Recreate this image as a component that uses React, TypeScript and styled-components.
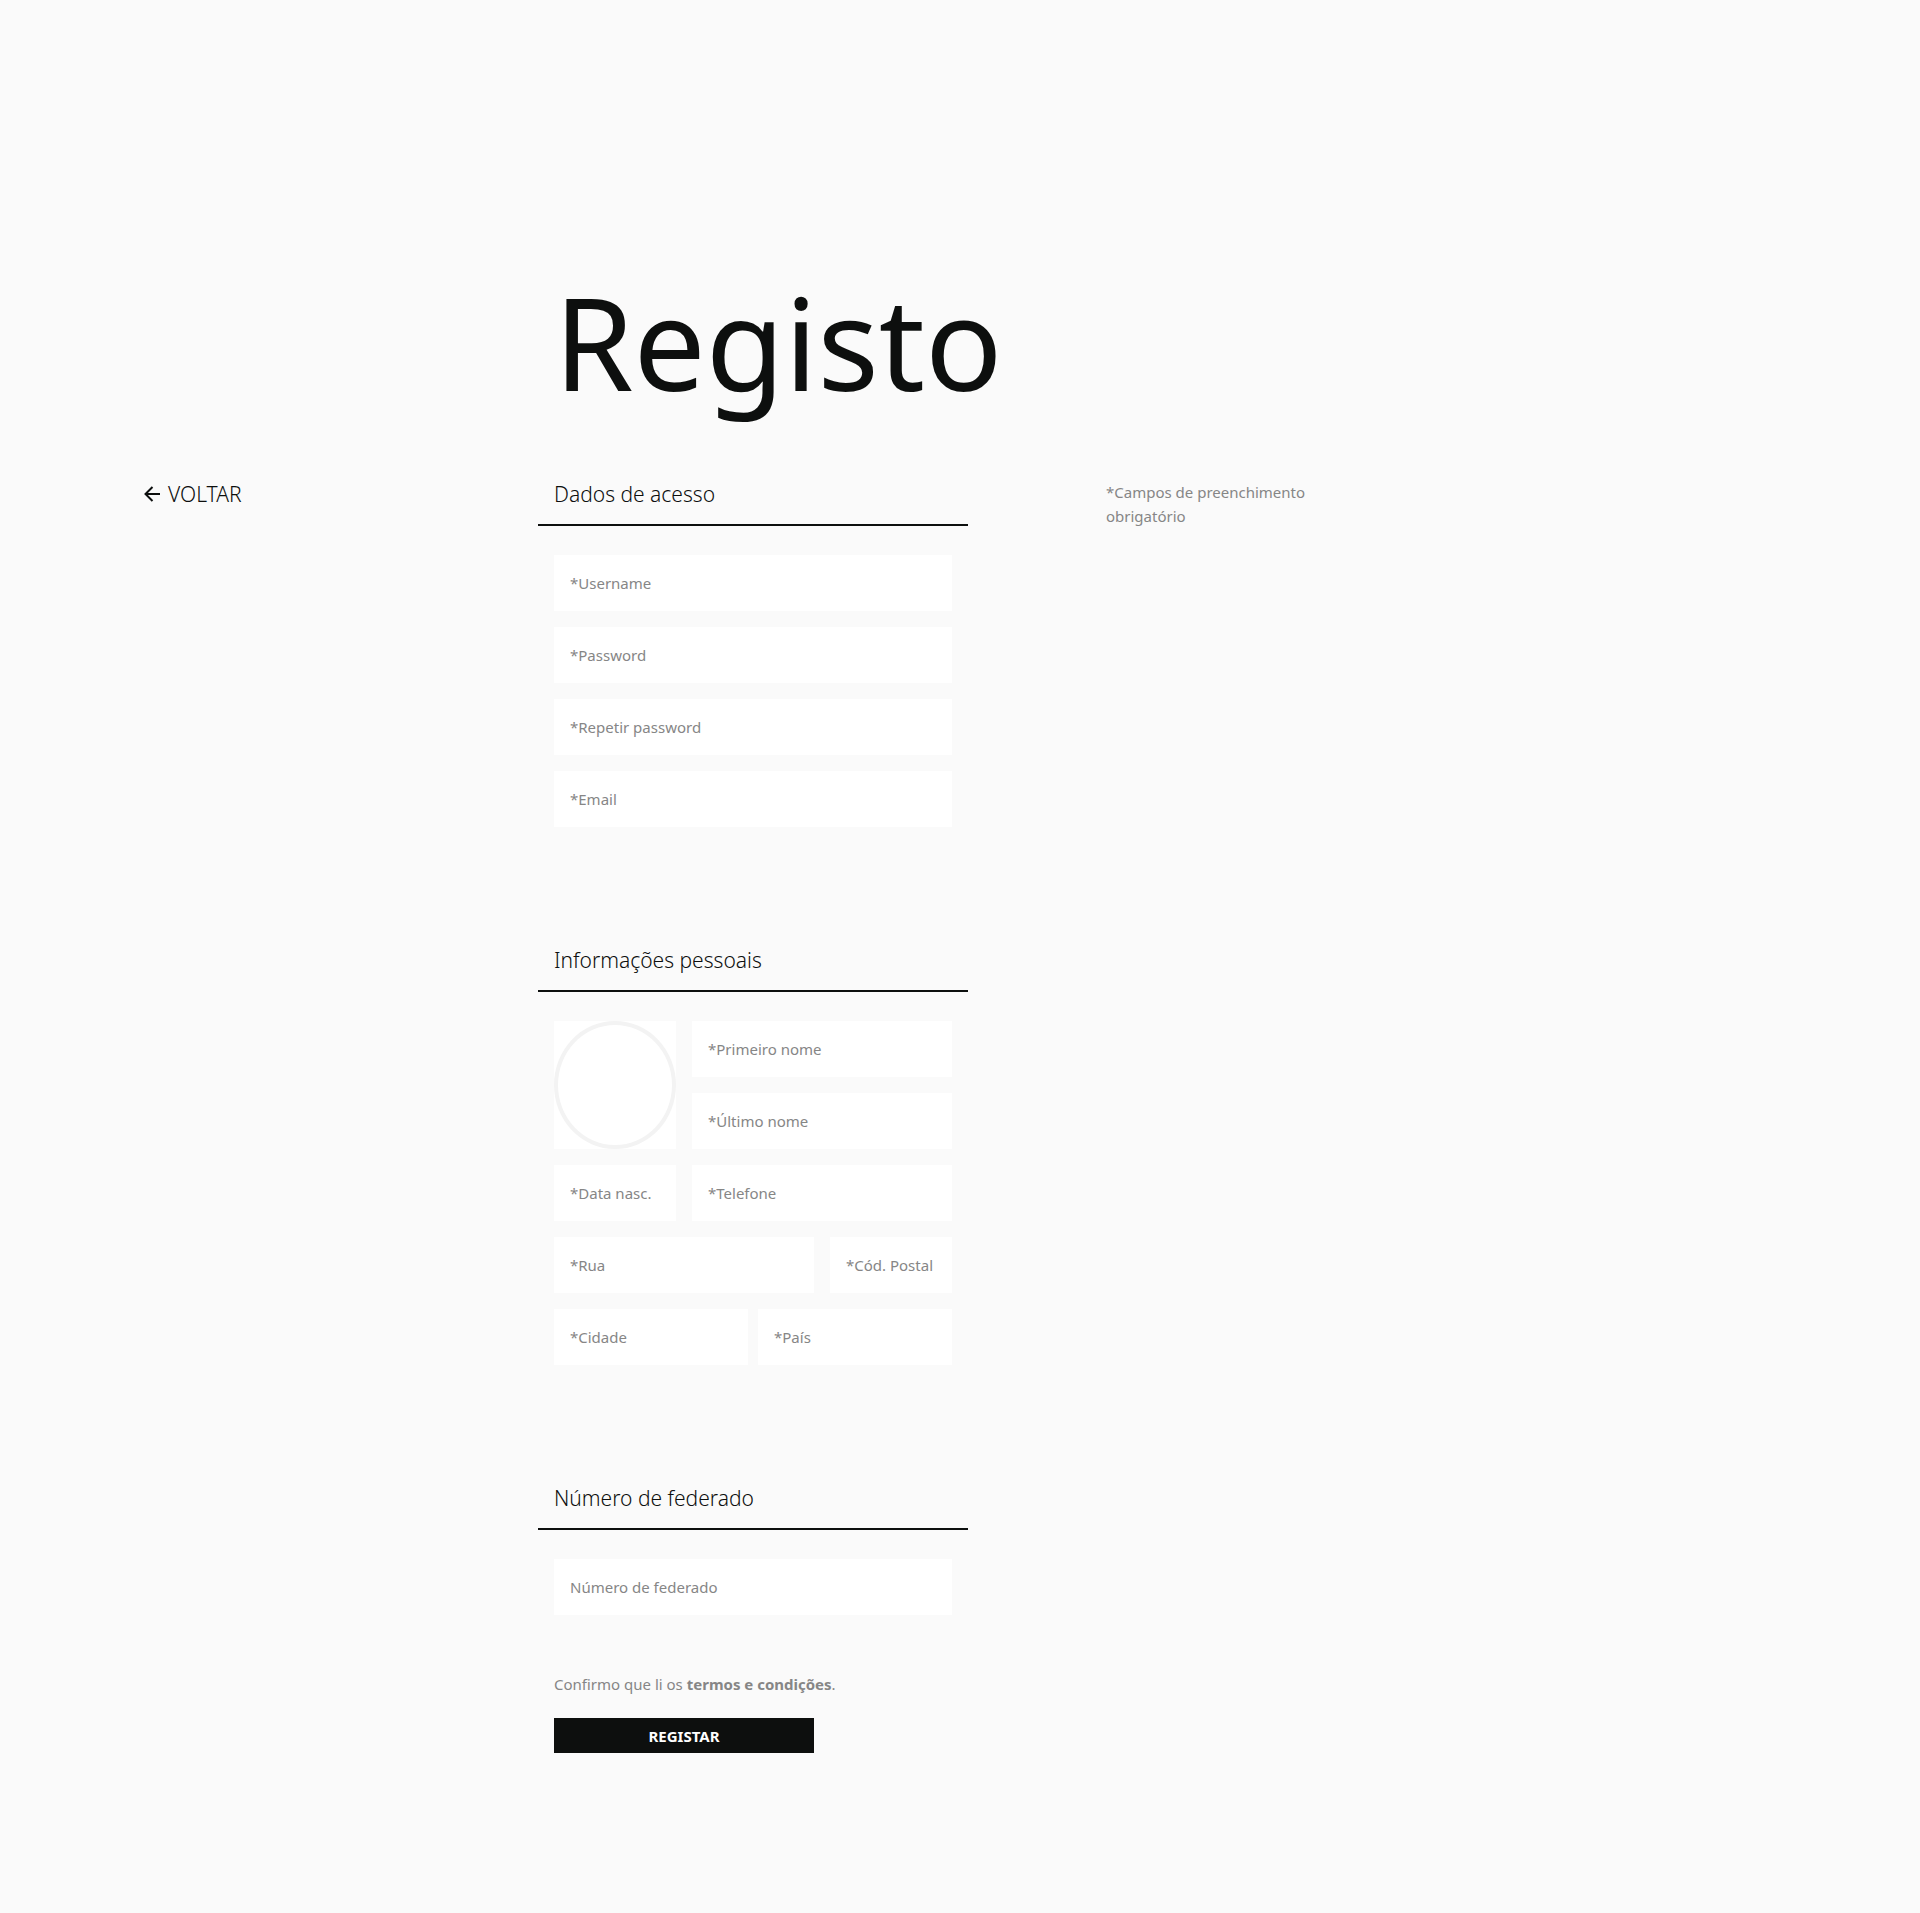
import React from "react";
import styled, { createGlobalStyle } from "styled-components";

const ink = "#0d0f0e";
const muted = "#868686";

const GlobalStyle = createGlobalStyle`
  *, *::before, *::after { box-sizing: border-box; }
  body {
    margin: 0;
    background: #fafafa;
    color: ${ink};
    font-family: "Noto Sans", "Open Sans", sans-serif;
    font-size: 15px;
    line-height: 24px;
  }
`;

const Page = styled.main`
  display: grid;
  grid-template-columns: repeat(12, minmax(0, 1fr));
  grid-template-rows: auto 1fr;
  column-gap: 16px;
  align-items: start;
  min-height: 100vh;
  padding: 252px 140px 158px;
`;

const Title = styled.h1`
  grid-column: 4 / -1;
  margin: 0 0 48px;
  font-size: 128px;
  line-height: 180px;
  font-weight: 400;
`;

const BackLink = styled.a`
  grid-column: 1 / span 3;
  justify-self: start;
  display: flex;
  align-items: center;
  gap: 8px;
  padding-left: 4px;
  color: ${ink};
  font-size: 21px;
  font-weight: 300;
  line-height: 28px;
  text-decoration: none;
`;

const Form = styled.form`
  grid-column: 4 / span 3;
`;

const Note = styled.p`
  grid-column: 8 / span 2;
  margin: 0;
  color: ${muted};
`;

const Section = styled.fieldset`
  min-width: 0;
  margin: 0 0 119px;
  padding: 0;
  border: 0;

  &:last-of-type { margin-bottom: 0; }
`;

const SectionTitle = styled.h2`
  margin: 0 -16px 29px;
  padding: 0 16px 16px;
  border-bottom: 2px solid ${ink};
  font-size: 21px;
  font-weight: 300;
  line-height: 28px;
`;

const Fields = styled.div`
  display: grid;
  grid-template-columns: repeat(3, minmax(0, 1fr));
  gap: 16px;
`;

const Input = styled.input<{ $span?: number }>`
  grid-column: span ${(p) => p.$span ?? 3};
  width: 100%;
  min-width: 0;
  height: 56px;
  padding: 0 16px;
  border: 0;
  border-radius: 0;
  background: #fff;
  color: ${ink};
  font: inherit;

  &::placeholder { color: ${muted}; opacity: 1; }
`;

const Pair = styled.div`
  grid-column: 1 / -1;
  display: flex;
  gap: 10px;
`;

const Avatar = styled.button`
  grid-row: span 2;
  align-self: stretch;
  padding: 0;
  border: 0;
  background: #fff;
  display: grid;
`;

const Ring = styled.span`
  border: 4px solid #f3f3f3;
  border-radius: 50%;
`;

const Terms = styled.p`
  margin: 57px 0 22px;
  color: ${muted};
`;

const TermsLink = styled.a`
  color: inherit;
  font-weight: 700;
  text-decoration: none;
`;

const Submit = styled.button`
  width: 100%;
  height: 35px;
  padding: 0;
  border: 0;
  background: ${ink};
  color: #fff;
  font: inherit;
  font-weight: 700;
`;

const Actions = styled.div`
  display: grid;
  grid-template-columns: repeat(3, minmax(0, 1fr));
  column-gap: 16px;

  ${Submit} { grid-column: span 2; }
`;

type FieldProps = { label: string; type?: string; span?: number };

const Field = ({ label, type = "text", span }: FieldProps) => (
  <Input type={type} placeholder={label} aria-label={label} $span={span} />
);

const BackArrow = () => (
  <svg width="16" height="16" viewBox="0 0 16 16" fill="none" stroke="currentColor" strokeWidth="2" aria-hidden="true">
    <path d="M16 8H1.5M8.5 1L1.5 8L8.5 15" />
  </svg>
);

export default function App() {
  return (
    <>
      <GlobalStyle />
      <Page>
        <Title>Registo</Title>
        <BackLink href="#voltar">
          <BackArrow />
          VOLTAR
        </BackLink>
        <Form onSubmit={(e) => e.preventDefault()}>
          <Section>
            <SectionTitle>Dados de acesso</SectionTitle>
            <Fields>
              <Field label="*Username" />
              <Field label="*Password" type="password" />
              <Field label="*Repetir password" type="password" />
              <Field label="*Email" type="email" />
            </Fields>
          </Section>
          <Section>
            <SectionTitle>Informações pessoais</SectionTitle>
            <Fields>
              <Avatar type="button" aria-label="Fotografia">
                <Ring />
              </Avatar>
              <Field label="*Primeiro nome" span={2} />
              <Field label="*Último nome" span={2} />
              <Field label="*Data nasc." span={1} />
              <Field label="*Telefone" type="tel" span={2} />
              <Field label="*Rua" span={2} />
              <Field label="*Cód. Postal" span={1} />
              <Pair>
                <Field label="*Cidade" />
                <Field label="*País" />
              </Pair>
            </Fields>
          </Section>
          <Section>
            <SectionTitle>Número de federado</SectionTitle>
            <Fields>
              <Field label="Número de federado" />
            </Fields>
          </Section>
          <Terms>
            Confirmo que li os <TermsLink href="#termos">termos e condições</TermsLink>.
          </Terms>
          <Actions>
            <Submit type="submit">REGISTAR</Submit>
          </Actions>
        </Form>
        <Note>*Campos de preenchimento obrigatório</Note>
      </Page>
    </>
  );
}
